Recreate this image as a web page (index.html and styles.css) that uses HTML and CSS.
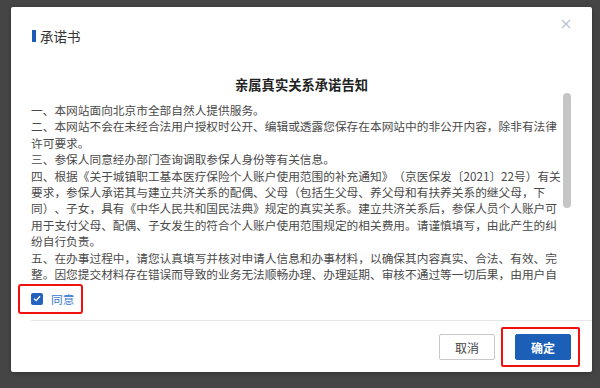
FILE: index.html
```html
<!DOCTYPE html>
<html lang="zh-CN">
<head>
<meta charset="utf-8">
<title>承诺书</title>
<link rel="stylesheet" href="styles.css">
</head>
<body>
<div class="dialog">
  <div class="dlg-header">
    <span class="title-bar"></span>
    <span class="title">承诺书</span>
  </div>
  <button class="close" aria-label="关闭">
    <svg width="10" height="10" viewBox="0 0 10 10"><path d="M1 1L9 9M9 1L1 9" stroke="#b4c0d2" stroke-width="1.2" fill="none"/></svg>
  </button>
  <h2 class="notice-title">亲属真实关系承诺告知</h2>
  <div class="notice-row">
    <div class="notice-text">
      <p>一、本网站面向北京市全部自然人提供服务。</p>
      <p>二、本网站不会在未经合法用户授权时公开、编辑或透露您保存在本网站中的非公开内容，除非有法律许可要求。</p>
      <p>三、参保人同意经办部门查询调取参保人身份等有关信息。</p>
      <p>四、根据《关于城镇职工基本医疗保险个人账户使用范围的补充通知》（京医保发〔2021〕22号）有关要求，参保人承诺其与建立共济关系的配偶、父母（包括生父母、养父母和有扶养关系的继父母，下同）、子女，具有《中华人民共和国民法典》规定的真实关系。建立共济关系后，参保人员个人账户可用于支付父母、配偶、子女发生的符合个人账户使用范围规定的相关费用。请谨慎填写，由此产生的纠纷自行负责。</p>
      <p>五、在办事过程中，请您认真填写并核对申请人信息和办事材料，以确保其内容真实、合法、有效、完整。因您提交材料存在错误而导致的业务无法顺畅办理、办理延期、审核不通过等一切后果，由用户自</p>
    </div>
    <div class="scroll-track"><div class="scroll-thumb"></div></div>
  </div>
  <div class="agree-wrap">
    <label class="agree">
      <span class="checkbox">
        <svg width="8" height="7" viewBox="0 0 8 7"><path d="M1 3.6L3.1 5.6L7 1.2" stroke="#fff" stroke-width="1.3" fill="none"/></svg>
      </span>
      <span class="agree-text">同意</span>
    </label>
  </div>
  <div class="dlg-footer">
    <button class="btn btn-cancel">取消</button>
    <div class="highlight">
      <button class="btn btn-ok">确定</button>
    </div>
  </div>
</div>
</body>
</html>
```

FILE: styles.css
```css
* { box-sizing: border-box; }
html, body {
  margin: 0;
  height: 100%;
}
body {
  background: #454545;
  padding: 7px 0 0 11px;
  font-family: "Noto Sans CJK SC", "Noto Sans", sans-serif;
  overflow: hidden;
  text-spacing-trim: space-all;
}
.dialog {
  position: relative;
  width: 581px;
  background: #fff;
  border-radius: 2px;
  box-shadow: 0 1px 4px rgba(0,0,0,0.3);
  padding-top: 20px;
  padding-bottom: 5px;
}
.dlg-header {
  display: flex;
  align-items: center;
  height: 18px;
  padding-left: 21px;
  gap: 4px;
}
.title-bar {
  width: 4px;
  height: 12px;
  background: #1a5cb8;
}
.title {
  font-size: 13.5px;
  line-height: 18px;
  color: #333;
}
.close {
  position: absolute;
  top: 12px;
  right: 21px;
  width: 10px;
  height: 10px;
  padding: 0;
  border: 0;
  background: none;
  display: flex;
}
.notice-title {
  margin: 30px 0 0;
  text-align: center;
  font-size: 13.3px;
  line-height: 19px;
  font-weight: bold;
  color: #222;
}
.notice-row {
  display: flex;
  padding-left: 20px;
}
.notice-text {
  width: 532px;
  height: 189px;
  overflow: hidden;
  padding-top: 8px;
  font-size: 11.7px;
  line-height: 16.4px;
  color: #4a4a4a;
}
.notice-text p { margin: 0; }
.scroll-track {
  width: 8px;
  margin-top: -1px;
}
.scroll-thumb {
  width: 8px;
  height: 115px;
  border-radius: 4px;
  background: #c6c6c6;
}
.agree-wrap {
  padding-left: 7px;
  height: 30px;
}
.agree {
  display: inline-flex;
  align-items: center;
  gap: 8px;
  height: 30px;
  padding: 0 7px 0 11px;
  border: 2px solid #f01010;
  border-radius: 3px;
}
.checkbox {
  width: 12px;
  height: 12px;
  border-radius: 2px;
  background: #2462bd;
  display: flex;
  align-items: center;
  justify-content: center;
}
.agree-text {
  font-size: 11.7px;
  color: #3a7ad2;
  line-height: 16px;
}
.dlg-footer {
  margin-top: 7px;
  margin-left: 20px;
  border-top: 1px solid #e6e6e6;
  padding: 6px 12px 0 0;
  display: flex;
  justify-content: flex-end;
  align-items: center;
  gap: 6px;
}
.btn {
  width: 56px;
  height: 26px;
  border-radius: 2px;
  font-family: inherit;
  font-size: 12px;
  padding: 0;
  cursor: pointer;
}
.btn-cancel {
  background: #fff;
  border: 1px solid #c9c9c9;
  color: #444;
}
.highlight {
  border: 2px solid #f01010;
  border-radius: 2px;
  padding: 5px 7px 5px 12px;
  display: flex;
}
.btn-ok {
  background: #1b5fb6;
  border: 1px solid #1b5fb6;
  color: #fff;
  font-weight: bold;
}
```
